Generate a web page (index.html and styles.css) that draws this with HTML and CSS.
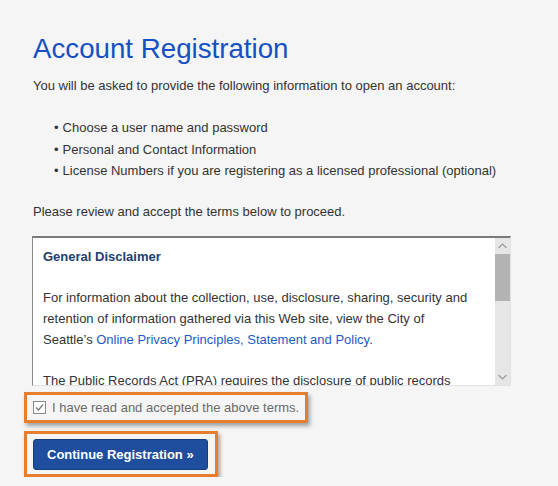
FILE: index.html
```html
<!DOCTYPE html>
<html lang="en">
<head>
<meta charset="utf-8">
<title>Account Registration</title>
<link rel="stylesheet" href="styles.css">
</head>
<body>
<main class="page">
  <h1 class="title">Account Registration</h1>
  <p class="intro">You will be asked to provide the following information to open an account:</p>
  <ul class="steps">
    <li>Choose a user name and password</li>
    <li>Personal and Contact Information</li>
    <li>License Numbers if you are registering as a licensed professional (optional)</li>
  </ul>
  <p class="review">Please review and accept the terms below to proceed.</p>

  <div class="terms">
    <div class="terms-body">
      <h2 class="terms-title">General Disclaimer</h2>
      <p class="terms-text">For information about the collection, use, disclosure, sharing, security and retention of information gathered via this Web site, view the City of Seattle’s <a class="link" href="#">Online Privacy Principles, Statement and Policy</a>.</p>
      <p class="terms-text">The Public Records Act (PRA) requires the disclosure of public records that are not exempt from disclosure.</p>
    </div>
    <div class="scrollbar">
      <div class="sb-arrow">
        <svg width="9" height="6" viewBox="0 0 9 6"><path d="M0.5 5 L4.5 1 L8.5 5" fill="none" stroke="#9a9a9a" stroke-width="1.2"/></svg>
      </div>
      <div class="sb-track"><div class="sb-thumb"></div></div>
      <div class="sb-arrow">
        <svg width="9" height="6" viewBox="0 0 9 6"><path d="M0.5 1 L4.5 5 L8.5 1" fill="none" stroke="#9a9a9a" stroke-width="1.2"/></svg>
      </div>
    </div>
  </div>

  <div class="highlight highlight-check">
    <label class="accept">
      <span class="checkbox">
        <svg width="11" height="11" viewBox="0 0 11 11"><path d="M2 5.5 L4.5 8 L9 2.5" fill="none" stroke="#7a7a7a" stroke-width="1.3"/></svg>
      </span>
      <span class="accept-text">I have read and accepted the above terms.</span>
    </label>
  </div>

  <div class="highlight highlight-button">
    <button class="continue" type="button">Continue Registration »</button>
  </div>
</main>
</body>
</html>
```

FILE: styles.css
```css
html, body {
  margin: 0;
  padding: 0;
  background: #f5f5f5;
}

body {
  font-family: Arial, "Liberation Sans", sans-serif;
  font-size: 13px;
  color: #333333;
}

.page {
  padding: 32px 0 0 33px;
  width: 478px;
}

.title {
  margin: 0;
  font-size: 27.7px;
  line-height: 34px;
  font-weight: normal;
  color: #1550c4;
}

.intro {
  margin: 9px 0 0;
  line-height: 21px;
}

.steps {
  list-style: none;
  margin: 21px 0 0;
  padding: 0 0 0 21px;
  line-height: 21.5px;
}

.steps li::before {
  content: "•";
  margin-right: 4px;
}

.review {
  margin: 19px 0 0;
  line-height: 21px;
}

.terms {
  margin-top: 14px;
  height: 147px;
  display: flex;
  background: #ffffff;
  border-style: solid;
  border-width: 2px 1px 1px 1px;
  border-color: #7a7a7a #e2e2e2 #e2e2e2 #8a8a8a;
  margin-left: -1px;
}

.terms-body {
  flex: 1;
  overflow: hidden;
  padding: 8px 25px 0 10px;
}

.terms-title {
  margin: 0;
  font-size: 13px;
  line-height: 21px;
  font-weight: bold;
  color: #1c3f6e;
}

.terms-text {
  margin: 20px 0 0;
  line-height: 21px;
  color: #333333;
}

.link {
  color: #1a5cc8;
  text-decoration: none;
}

.scrollbar {
  width: 15px;
  display: flex;
  flex-direction: column;
  background: #e6e6e6;
}

.sb-arrow {
  height: 16px;
  display: flex;
  align-items: center;
  justify-content: center;
}

.sb-track {
  flex: 1;
}

.sb-thumb {
  height: 47px;
  background: #b3b3b3;
}

.highlight {
  display: flex;
  width: fit-content;
  border: 3px solid #e87d2e;
  box-shadow: 2px 3px 4px rgba(0, 0, 0, 0.35);
  margin-left: -9px;
}

.highlight-check {
  margin-top: 6px;
  padding: 5px 6px 4px 6px;
}

.accept {
  display: flex;
  align-items: center;
  gap: 6px;
}

.checkbox {
  width: 11px;
  height: 11px;
  border: 1px solid #8a8a8a;
  background: #ffffff;
  display: flex;
}

.accept-text {
  font-size: 13px;
  line-height: 16px;
  color: #6a6a6a;
}

.highlight-button {
  margin-top: 8px;
  padding: 5px 7px 4px 6px;
}

.continue {
  font-family: Arial, "Liberation Sans", sans-serif;
  font-size: 13px;
  font-weight: bold;
  color: #ffffff;
  background: #1f4e9e;
  border: 1px solid #163d80;
  border-radius: 3px;
  padding: 0 13px;
  height: 31px;
  white-space: nowrap;
}
```
